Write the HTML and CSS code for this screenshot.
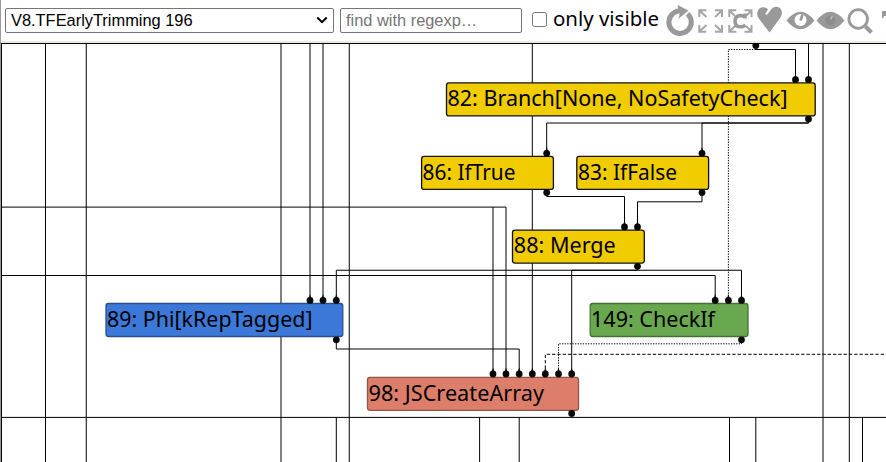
FILE: index.html
```html
<!DOCTYPE html>
<html lang="en">
<head>
<meta charset="utf-8">
<title>Turbolizer</title>
<link rel="stylesheet" href="styles.css">
</head>
<body>
<main class="pane">
<header class="toolbar">
  <div class="phase"><span>V8.TFEarlyTrimming 196</span><svg class="chevron" viewBox="0 0 12 8"><path d="M1.3 1.5 6 6.2l4.7-4.7"/></svg></div>
  <input class="search" type="text" placeholder="find with regexp…">
  <label class="only"><input class="check" type="checkbox"><svg class="label" width="108" height="32"><text x="1" y="26" textLength="106" lengthAdjust="spacingAndGlyphs">only visible</text></svg></label>
  <svg class="icons" width="222" height="40" viewBox="664 0 222 40">
    <path class="reload" d="M673 13.500A11.200 11.200 0 1 0 687.500 13.800M673 13.500Q676 10.700 681 10.700"/>
    <path class="fill" d="m677.500 5 11 5.500-10 8.200 1.400-5.200-1.700-4.800z"/>
    <g class="arrows"><path d="M699.300 17v-6.800h7M715 10.200h7V17M722 25v6.800h-7M706.300 31.800h-7V25M700 11l6.500 6M721.500 11l-6.500 6M721.500 31l-6.500-6M700 31l6.500-6"/></g>
    <g class="arrows"><path d="M729.300 17v-6.800h7M744.500 10.200h7V17M751.500 25v6.800h-7M736.300 31.800h-7V25M730 11l5 5M751 11l-5 5M751 31l-5-5M730 31l5-5"/></g>
    <path class="cee" d="M745 17Q742 15.400 740 15.600 735 16 735 21.300T740 26.800Q743 26.900 745.500 25.200M745 13.500v5"/>
    <path class="fill" d="M769.500 32.500 758.800 18.500C755.500 13.500 757.500 7.500 763 7.200c2-.1 3.800.8 5 2.300l-2.800 4.500 1.600 1 4.300-5.500c2-3 6-3.600 8.500-1.700 3.200 2.700 2.700 7.200.2 10.700z"/>
    <path class="fill" d="M786.500 20.500Q800.500 3 814.500 20.500 800.500 38 786.500 20.500z"/>
    <circle class="iris" cx="800.500" cy="20" r="6"/><path class="tick" d="m800.500 20.500 2-6"/>
    <path class="fill" d="M816.500 20.500Q830.500 3 844.500 20.500 830.500 38 816.500 20.500z"/>
    <circle class="pupil" cx="830.500" cy="20.500" r="5"/><path class="dim" d="m830.500 19.500 2-3.500"/>
    <circle class="lens" cx="858.200" cy="19" r="9.300"/><path class="handle" d="m865.500 26.500 6 6"/>
    <path class="fill" d="M882 11h4v5h-2l-.5 2H882z"/>
  </svg>
</header>
<svg class="graph" width="884" height="418" viewBox="2 44 884 418">
  <g class="edges">
    <path d="M45.500 44V462M86.250 44V462M281 44V462M349.250 44V462M532.300 44V374M823 44V462M849.300 44V462"/>
    <path d="M310 44V300M323 44V300M336.300 300V270.250H741.500V300"/>
    <path d="M0 207.100H493V374M493 207.100H506V374M0 275.500H715.200V300"/>
    <path d="M755.800 45V49.500H795.500V79M808.500 44V79M808.500 119V123H546.700V153M702 123H808.500M702 153V123"/>
    <path d="M546.700 193V196.500H624.500V227M702 193V201.800H637.500V227M637.500 266V270.250H571.700V374"/>
    <path d="M336.300 340V349H519.200V374M0 417.400H886M571.700 413v4"/>
    <path d="M336.300 417V462M479.600 417V462M519.200 417V462M729.500 417V462M755.800 417V462M862.500 417V462"/>
    <path class="dotted" d="M755.800 49.500H728.400V300M741.500 340V343.800H558.500V374"/>
    <path class="dashed" d="M545.300 374V354.300H886"/>
  </g>
  <g class="nodes">
    <rect class="control" x="446.500" y="82.900" width="368.700" height="33" rx="2.500"/>
    <rect class="control" x="421.600" y="156.400" width="131.800" height="33" rx="2.500"/>
    <rect class="control" x="576.800" y="156.400" width="131.800" height="33" rx="2.500"/>
    <rect class="control" x="512.500" y="230.100" width="131.800" height="33" rx="2.500"/>
    <rect class="phi" x="106" y="303.500" width="236.800" height="33" rx="2.500"/>
    <rect class="check-node" x="590.200" y="303.500" width="157.800" height="33" rx="2.500"/>
    <rect class="js" x="367.500" y="377.300" width="211" height="33" rx="2.500"/>
  </g>
  <g class="names">
    <text x="447.500" y="105.800" textLength="340" lengthAdjust="spacingAndGlyphs">82: Branch[None, NoSafetyCheck]</text>
    <text x="422.500" y="179.500" textLength="93" lengthAdjust="spacingAndGlyphs">86: IfTrue</text>
    <text x="578" y="179.500" textLength="99" lengthAdjust="spacingAndGlyphs">83: IfFalse</text>
    <text x="513.800" y="253" textLength="102" lengthAdjust="spacingAndGlyphs">88: Merge</text>
    <text x="107" y="326.700" textLength="205.500" lengthAdjust="spacingAndGlyphs">89: Phi[kRepTagged]</text>
    <text x="591" y="326.700" textLength="124" lengthAdjust="spacingAndGlyphs">149: CheckIf</text>
    <text x="368.500" y="400.500" textLength="175.500" lengthAdjust="spacingAndGlyphs">98: JSCreateArray</text>
  </g>
  <g class="ports">
    <circle cx="755.800" cy="45.500" r="3.400"/><circle cx="795.500" cy="79.700" r="3.400"/><circle cx="808.500" cy="79.700" r="3.400"/><circle cx="808.500" cy="119" r="3.400"/>
    <circle cx="546.700" cy="153.300" r="3.400"/><circle cx="702" cy="153.300" r="3.400"/><circle cx="546.700" cy="192.600" r="3.400"/><circle cx="702" cy="192.600" r="3.400"/>
    <circle cx="624.500" cy="227" r="3.400"/><circle cx="637.500" cy="227" r="3.400"/><circle cx="637.500" cy="266.300" r="3.400"/>
    <circle cx="310" cy="300.400" r="3.400"/><circle cx="323" cy="300.400" r="3.400"/><circle cx="336.300" cy="300.400" r="3.400"/><circle cx="336.300" cy="339.800" r="3.400"/>
    <circle cx="715.200" cy="300.400" r="3.400"/><circle cx="728.400" cy="300.400" r="3.400"/><circle cx="741.500" cy="300.400" r="3.400"/><circle cx="741.500" cy="339.800" r="3.400"/>
    <circle cx="493" cy="374" r="3.400"/><circle cx="506" cy="374" r="3.400"/><circle cx="519.200" cy="374" r="3.400"/><circle cx="532.300" cy="374" r="3.400"/><circle cx="545.300" cy="374" r="3.400"/><circle cx="558.500" cy="374" r="3.400"/><circle cx="571.700" cy="374" r="3.400"/><circle cx="571.700" cy="413.400" r="3.400"/>
    <path d="M793.800 79 795.500 73.500 797.200 79zM806.800 79 808.500 73.500 810.200 79zM545 152.500 546.700 147 548.400 152.500zM700.300 152.500 702 147 703.700 152.500zM622.800 226 624.500 220.500 626.200 226zM635.800 226 637.500 220.500 639.200 226z"/>
    <path d="M308.300 299.500 310 294 311.700 299.500zM321.300 299.500 323 294 324.700 299.500zM334.600 299.500 336.300 294 338 299.500zM713.500 299.500 715.200 294 716.900 299.500zM726.700 299.500 728.400 294 730.100 299.500zM739.800 299.500 741.500 294 743.200 299.500z"/>
    <path d="M491.300 373 493 367.500 494.700 373zM504.300 373 506 367.500 507.700 373zM517.500 373 519.200 367.500 520.900 373zM530.600 373 532.300 367.500 534 373zM543.600 373 545.300 367.500 547 373zM556.800 373 558.500 367.500 560.200 373zM570 373 571.700 367.500 573.400 373z"/>
  </g>
</svg>
</main>
</body>
</html>
```
FILE: styles.css
```css
* { box-sizing: border-box; }
body { margin: 0; background: #fff; overflow: hidden; }
.pane { width: 886px; height: 462px; border-left: 1px solid #999; overflow: hidden; }
.toolbar { display: flex; height: 43px; align-items: flex-start; border-bottom: 2px solid #efe9d9; padding-left: 4px; overflow: hidden; }
.phase { flex: none; display: flex; align-items: center; justify-content: space-between; width: 329px; height: 25px; margin-top: 8px; padding: 0 5px 1px; border: 1px solid #767676; border-radius: 2px; font: 16.4px "Liberation Sans", sans-serif; color: #000; }
.chevron { width: 12px; height: 8px; fill: none; stroke: #000; stroke-width: 2; }
.search { flex: none; width: 182px; height: 25px; margin: 8px 0 0 6px; padding: 0 5px 1px; border: 1px solid #767676; border-radius: 2px; font: 16.4px "Liberation Sans", sans-serif; }
.search::placeholder { color: #757575; }
.only { flex: none; display: flex; align-items: flex-start; margin-left: 10px; }
.check { appearance: none; width: 15px; height: 15px; margin: 12px 5px 0 0; border: 1px solid #767676; border-radius: 2.5px; background: #fff; }
.label { flex: none; font: 20px "Noto Sans", sans-serif; }
.icons { flex: none; margin-left: 4px; fill: none; stroke: #999; }
.fill { fill: #999; stroke: none; }
.reload { stroke-width: 5; }
.arrows { stroke: #a5a5a5; stroke-width: 2; }
.cee { stroke-width: 3.6; }
.iris { fill: #fff; stroke: none; }
.tick { stroke: #999; stroke-width: 2.6; }
.dim { stroke: #b5b5b5; stroke-width: 1.8; }
.pupil { stroke: none; fill: #8c8c8c; }
.lens { stroke-width: 2.8; }
.handle { stroke-width: 4; }
.graph { display: block; width: 885px; height: 419px; border-top: 1px solid #000; border-left: 1px solid #000; }
.edges { fill: none; stroke: #000; stroke-width: 1; }
.dotted { stroke-dasharray: 1.3 1.3; }
.dashed { stroke-dasharray: 3.3 2; }
.nodes { stroke-width: 1.3; }
.control { fill: #f0cc00; stroke: #111; }
.phi { fill: #3c78d8; stroke: #28508f; }
.check-node { fill: #6aa84f; stroke: #466f34; }
.js { fill: #dd7e6b; stroke: #935447; }
.names { font: 21px "Noto Sans", sans-serif; fill: #000; }
.ports { fill: #080808; }
```
